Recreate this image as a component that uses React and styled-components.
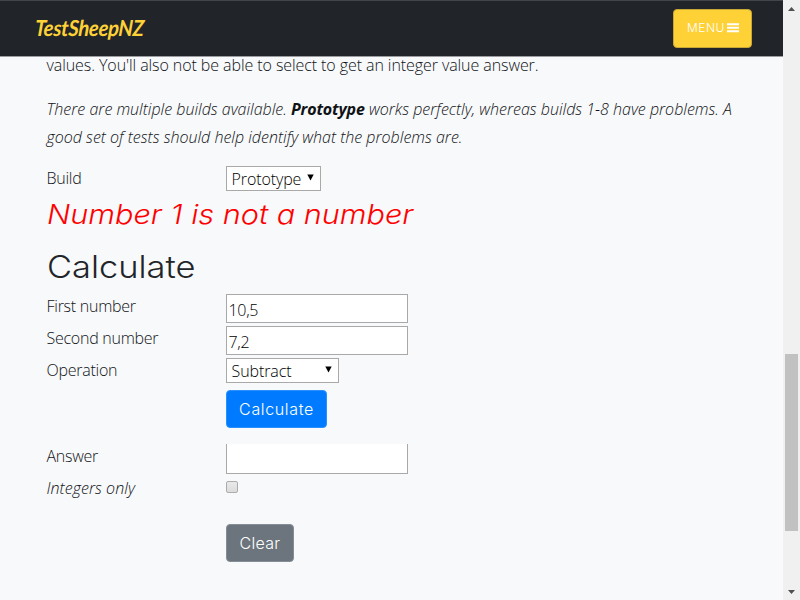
import React from "react";
import styled, { createGlobalStyle } from "styled-components";

const GlobalStyle = createGlobalStyle`
  * { box-sizing: border-box; }
  body { margin: 0; overflow: hidden; background: #f8f9fb; }
`;

const Window = styled.div`
  display: flex;
  width: 800px;
  height: 600px;
  overflow: hidden;
  color: #101316;
  background: #f8f9fb;
  font: 300 16px/28px "Open Sans", "Noto Sans", sans-serif;
`;

const Page = styled.div`
  display: flex;
  flex-direction: column;
  width: 783px;
`;

const Navbar = styled.header`
  display: flex;
  flex: none;
  align-items: center;
  justify-content: space-between;
  height: 57px;
  padding: 0 31px 0 35px;
  background: #212529;
  border-top: 1px solid #41464a;
  border-bottom: 1px solid #9b9da0;
`;

const Brand = styled.a`
  display: block;
  width: 110px;
  margin-top: -2px;
  color: #fed136;
  font: italic 700 22px/30px Lato, sans-serif;
  letter-spacing: -0.3px;
  white-space: nowrap;
  transform: scaleX(0.92) skewX(-4deg);
  transform-origin: left center;
`;

const MenuButton = styled.button`
  display: flex;
  align-items: center;
  justify-content: space-between;
  width: 79px;
  height: 39px;
  padding: 0 12px 1px 13px;
  color: #fff;
  background: #fed136;
  border: 1px solid #c9a735;
  border-radius: 4px;
  font: 300 12px/18px Inter, sans-serif;
  letter-spacing: 0.5px;
`;

const Content = styled.main`
  display: flex;
  flex-direction: column;
  flex: 1;
  min-height: 0;
  padding-left: 46.5px;
`;

const Paragraph = styled.p`
  flex: none;
  margin: 22px 0 0;
  font-style: italic;
  white-space: nowrap;

  b { font-weight: 700; letter-spacing: -0.15px; }
`;

const Intro = styled(Paragraph)`
  margin: 0;
  font-style: normal;
  letter-spacing: -0.08px;
  line-height: 16px;
`;

const Row = styled.div`
  display: grid;
  grid-template-columns: 179.5px auto;
  flex: none;
  align-items: start;
  justify-content: start;
  height: ${(p) => p.$height}px;
  margin-top: ${(p) => p.$top || 0}px;
`;

const Label = styled.label`
  margin-top: ${(p) => p.$shift || 0}px;
  font-style: ${(p) => (p.$italic ? "italic" : "normal")};
  letter-spacing: ${(p) => (p.$italic ? "0.05px" : "-0.26px")};
  line-height: 28px;
`;

const Heading = styled.h2`
  flex: none;
  align-self: flex-start;
  margin: 0;
  height: ${(p) => p.$height}px;
  color: ${(p) => (p.$error ? "#ff0000" : "#212529")};
  font-family: Inter, sans-serif;
  font-weight: 300;
  font-size: ${(p) => (p.$error ? 27 : 31)}px;
  font-style: ${(p) => (p.$error ? "italic" : "normal")};
  line-height: ${(p) => (p.$error ? 40 : 38)}px;
  white-space: nowrap;
  transform: scaleX(${(p) => (p.$error ? 1.134 : 1.11)});
  transform-origin: left center;
`;

const Select = styled.div`
  display: flex;
  align-items: center;
  justify-content: space-between;
  width: ${(p) => p.$width}px;
  height: 25px;
  margin-top: 2px;
  padding: 1px 6px 0 4.5px;
  color: #000;
  background: #fff;
  border: 1px solid #a9a9a9;
  line-height: 22px;
  letter-spacing: -0.1px;

  svg { margin-bottom: 3px; }
`;

const Input = styled.input`
  width: 182px;
  height: ${(p) => (p.$clipped ? 30 : 29)}px;
  margin: ${(p) => (p.$clipped ? 0 : 2)}px 0 0;
  padding: 3px 2px 0 1.5px;
  color: #000;
  background: #fff;
  border: 1px solid #a9a9a9;
  border-top-width: ${(p) => (p.$clipped ? 0 : 1)}px;
  border-radius: 0;
  outline: none;
  font: 300 16px/22px "Open Sans", "Noto Sans", sans-serif;
  letter-spacing: -0.3px;
`;

const Checkbox = styled.input`
  appearance: none;
  width: 12px;
  height: 12px;
  margin: 7px 0 0;
  background: linear-gradient(#e9e9e9, #dcdcdc);
  border: 1px solid #acacac;
  border-radius: 2px;
`;

const Button = styled.button`
  grid-column: 2;
  width: ${(p) => p.$width}px;
  height: 38px;
  padding: 0;
  color: #fff;
  background: ${(p) => (p.$secondary ? "#6c757d" : "#007bff")};
  border: 1px solid ${(p) => (p.$secondary ? "#858d95" : "#2b90ff")};
  border-radius: 4px;
  font: 300 16px/24px Inter, sans-serif;
  letter-spacing: ${(p) => (p.$secondary ? 0.3 : 0.65)}px;
`;

const Scrollbar = styled.aside`
  display: flex;
  flex-direction: column;
  align-items: center;
  width: 17px;
  height: 600px;
  background: #f0f0f0;
`;

const ScrollButton = styled.div`
  display: flex;
  align-items: center;
  justify-content: center;
  width: 17px;
  height: 17px;
`;

const Track = styled.div`
  flex: 1;
  width: 13px;
  padding-top: 337px;
`;

const Thumb = styled.div`
  height: 177px;
  background: #c1c1c1;
`;

const Arrow = () => (
  <svg width="7" height="7" viewBox="0 0 7 7"><path d="M0.3 0.5h6.4L3.5 6.5z" fill="#000" /></svg>
);

const Bars = () => (
  <svg width="12" height="10" viewBox="0 0 12 10">
    <path d="M0 1.2h12M0 4.7h12M0 8.2h12" stroke="#fff" strokeWidth="2.1" />
  </svg>
);

export default function App() {
  return (
    <Window>
      <GlobalStyle />
      <Page>
        <Navbar>
          <Brand>TestSheepNZ</Brand>
          <MenuButton>MENU<Bars /></MenuButton>
        </Navbar>
        <Content>
          <Intro>values. You'll also not be able to select to get an integer value answer.</Intro>
          <Paragraph>
            There are multiple builds available. <b>Prototype</b> works perfectly, whereas builds 1-8 have problems. A<br />
            good set of tests should help identify what the problems are.
          </Paragraph>
          <Row $height={31} $top={13}>
            <Label>Build</Label>
            <Select $width={95}>Prototype<Arrow /></Select>
          </Row>
          <Heading $error $height={53}>Number 1 is not a number</Heading>
          <Heading as="h1" $height={44}>Calculate</Heading>
          <Row $height={32}>
            <Label>First number</Label>
            <Input defaultValue="10,5" />
          </Row>
          <Row $height={32}>
            <Label>Second number</Label>
            <Input defaultValue="7,2" />
          </Row>
          <Row $height={34}>
            <Label>Operation</Label>
            <Select $width={113}>Subtract<Arrow /></Select>
          </Row>
          <Row $height={54}>
            <Button $width={101}>Calculate</Button>
          </Row>
          <Row $height={30}>
            <Label $shift={-2}>Answer</Label>
            <Input $clipped />
          </Row>
          <Row $height={50}>
            <Label $italic>Integers only</Label>
            <Checkbox type="checkbox" />
          </Row>
          <Row $height={38}>
            <Button $secondary $width={68}>Clear</Button>
          </Row>
        </Content>
      </Page>
      <Scrollbar>
        <ScrollButton>
          <svg width="7" height="4" viewBox="0 0 7 4"><path d="M0 4L3.5 0 7 4z" fill="#505050" /></svg>
        </ScrollButton>
        <Track><Thumb /></Track>
        <ScrollButton>
          <svg width="7" height="4" viewBox="0 0 7 4"><path d="M0 0h7L3.5 4z" fill="#505050" /></svg>
        </ScrollButton>
      </Scrollbar>
    </Window>
  );
}
